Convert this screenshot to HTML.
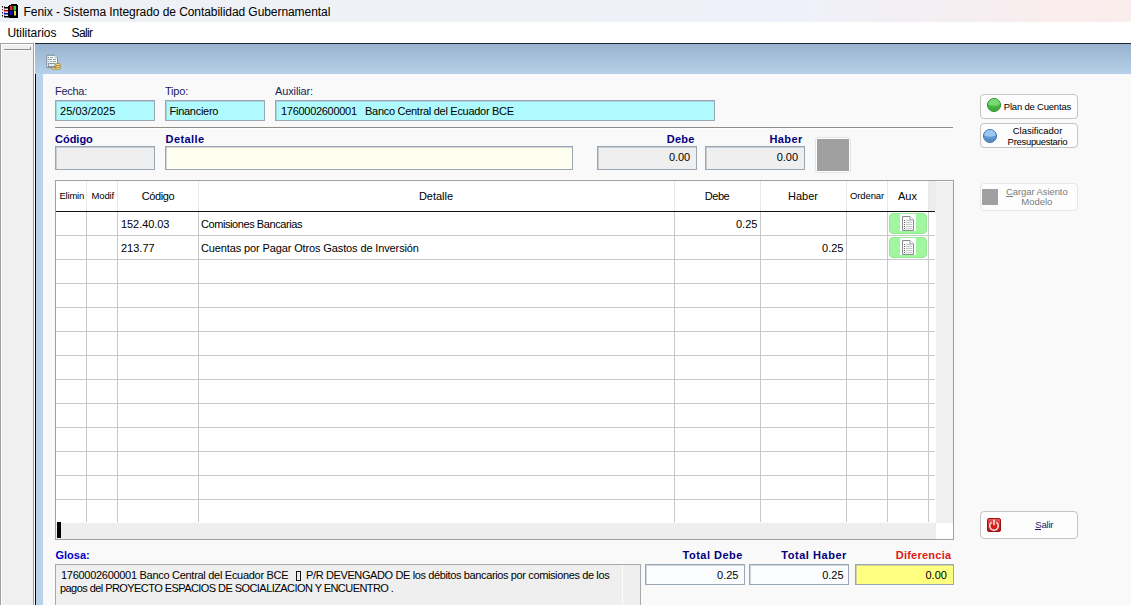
<!DOCTYPE html>
<html><head><meta charset="utf-8"><style>
html,body{margin:0;padding:0;width:1131px;height:605px;overflow:hidden;background:#f8f8f8;}
body>div{position:absolute;}
.t{font-family:"Liberation Sans",sans-serif;white-space:pre;}
</style></head><body>
<div style="left:0px;top:0px;width:1131px;height:22px;background:linear-gradient(90deg,#eef1f5 0%,#eef1f5 45%,#eef1f8 62%,#eff1fa 70%,#f3eff3 82%,#f9edee 92%,#f9eeec 100%);"></div>
<div style="left:0px;top:22px;width:1131px;height:21px;background:#fff;"></div>
<div style="left:0px;top:43px;width:34px;height:562px;background:#f0f0f0;border-left:1px solid #a0a0a0;border-top:1px solid #a0a0a0;border-right:1px solid #a0a0a0;box-sizing:border-box;"></div>
<div style="left:1px;top:44px;width:32px;height:1px;background:#fff;"></div>
<div style="left:1px;top:44px;width:1px;height:561px;background:#fff;"></div>
<div style="left:4px;top:49px;width:27px;height:1px;background:#8c8c8c;"></div>
<div style="left:4px;top:50px;width:27px;height:1px;background:#fafafa;"></div>
<div style="left:30px;top:47px;width:1px;height:3px;background:#8c8c8c;"></div>
<div style="left:34px;top:43px;width:1px;height:562px;background:#fff;"></div>
<div style="left:35px;top:43px;width:1096px;height:1px;background:#1e2a36;"></div>
<div style="left:35px;top:44px;width:1096px;height:30px;background:linear-gradient(180deg,#98b2cf 0%,#a8c2dc 50%,#b6d0ea 100%);"></div>
<div style="left:35px;top:74px;width:8px;height:531px;background:#b9d1ea;"></div>
<div style="left:35px;top:74px;width:1px;height:531px;background:#000;"></div>
<div style="left:43px;top:74px;width:1088px;height:531px;background:#f9f9f9;"></div>
<div style="left:55px;top:127px;width:898px;height:1px;background:#8c8c8c;"></div>
<div style="left:55px;top:128px;width:898px;height:1px;background:#fff;"></div>
<div style="left:55px;top:100px;width:100px;height:21px;background:#affafc;border:1px solid #9aa6b2;box-shadow:inset 1px 1px 0 rgba(150,165,180,0.45);box-sizing:border-box;"></div>
<div style="left:165px;top:100px;width:100px;height:21px;background:#affafc;border:1px solid #9aa6b2;box-shadow:inset 1px 1px 0 rgba(150,165,180,0.45);box-sizing:border-box;"></div>
<div style="left:275px;top:100px;width:440px;height:21px;background:#affafc;border:1px solid #9aa6b2;box-shadow:inset 1px 1px 0 rgba(150,165,180,0.45);box-sizing:border-box;"></div>
<div style="left:55px;top:146px;width:100px;height:24px;background:#efefef;border:1px solid #9aa6b2;box-shadow:inset 1px 1px 0 rgba(150,165,180,0.45);box-sizing:border-box;"></div>
<div style="left:165px;top:146px;width:408px;height:24px;background:#fffff0;border:1px solid #9aa6b2;box-shadow:inset 1px 1px 0 rgba(150,165,180,0.45);box-sizing:border-box;"></div>
<div style="left:597px;top:146px;width:100px;height:24px;background:#efefef;border:1px solid #9aa6b2;box-shadow:inset 1px 1px 0 rgba(150,165,180,0.45);box-sizing:border-box;"></div>
<div style="left:705px;top:146px;width:100px;height:24px;background:#efefef;border:1px solid #9aa6b2;box-shadow:inset 1px 1px 0 rgba(150,165,180,0.45);box-sizing:border-box;"></div>
<div style="left:815px;top:137px;width:36px;height:36px;background:#fff;border:1px solid #e4e4e4;border-radius:3px;box-sizing:border-box;"></div>
<div style="left:817px;top:139px;width:32px;height:32px;background:#a0a0a0;"></div>
<div style="left:55px;top:180px;width:899px;height:360px;background:#fff;border:1px solid #a0a0a0;box-sizing:border-box;"></div>
<div style="left:929px;top:181px;width:7px;height:30px;background:#ececec;"></div>
<div style="left:936px;top:182px;width:17px;height:341px;background:#f0f0f0;"></div>
<div style="left:56px;top:523px;width:880px;height:16px;background:#eeeeee;"></div>
<div style="left:57px;top:522px;width:4px;height:16px;background:#000;"></div>
<div style="left:56px;top:211px;width:879px;height:1px;background:#111;"></div>
<div style="left:86px;top:181px;width:1px;height:30px;background:#e8e8e8;"></div>
<div style="left:86px;top:212px;width:1px;height:310px;background:#c8c8c8;"></div>
<div style="left:117px;top:181px;width:1px;height:30px;background:#e8e8e8;"></div>
<div style="left:117px;top:212px;width:1px;height:310px;background:#c8c8c8;"></div>
<div style="left:198px;top:181px;width:1px;height:30px;background:#e8e8e8;"></div>
<div style="left:198px;top:212px;width:1px;height:310px;background:#c8c8c8;"></div>
<div style="left:674px;top:181px;width:1px;height:30px;background:#e8e8e8;"></div>
<div style="left:674px;top:212px;width:1px;height:310px;background:#c8c8c8;"></div>
<div style="left:760px;top:181px;width:1px;height:30px;background:#e8e8e8;"></div>
<div style="left:760px;top:212px;width:1px;height:310px;background:#c8c8c8;"></div>
<div style="left:846px;top:181px;width:1px;height:30px;background:#e8e8e8;"></div>
<div style="left:846px;top:212px;width:1px;height:310px;background:#c8c8c8;"></div>
<div style="left:887px;top:181px;width:1px;height:30px;background:#e8e8e8;"></div>
<div style="left:887px;top:212px;width:1px;height:310px;background:#c8c8c8;"></div>
<div style="left:928px;top:181px;width:1px;height:30px;background:#e8e8e8;"></div>
<div style="left:928px;top:212px;width:1px;height:310px;background:#c8c8c8;"></div>
<div style="left:56px;top:235px;width:879px;height:1px;background:#c8c8c8;"></div>
<div style="left:56px;top:259px;width:879px;height:1px;background:#c8c8c8;"></div>
<div style="left:56px;top:283px;width:879px;height:1px;background:#c8c8c8;"></div>
<div style="left:56px;top:307px;width:879px;height:1px;background:#c8c8c8;"></div>
<div style="left:56px;top:331px;width:879px;height:1px;background:#c8c8c8;"></div>
<div style="left:56px;top:355px;width:879px;height:1px;background:#c8c8c8;"></div>
<div style="left:56px;top:379px;width:879px;height:1px;background:#c8c8c8;"></div>
<div style="left:56px;top:403px;width:879px;height:1px;background:#c8c8c8;"></div>
<div style="left:56px;top:427px;width:879px;height:1px;background:#c8c8c8;"></div>
<div style="left:56px;top:451px;width:879px;height:1px;background:#c8c8c8;"></div>
<div style="left:56px;top:475px;width:879px;height:1px;background:#c8c8c8;"></div>
<div style="left:56px;top:499px;width:879px;height:1px;background:#c8c8c8;"></div>
<div style="left:889px;top:213px;width:38px;height:21px;background:#a0f7a0;border:1px solid #94e894;box-sizing:border-box;border-radius:4px;"></div>
<svg style="position:absolute;left:900px;top:214px" width="16" height="17" viewBox="0 0 16 17"><rect x="0" y="0" width="16" height="17" fill="#fff"/>
<path d="M2.5 2.5 H10 L13.5 6 V16.5 H2.5 Z" fill="#fafafa" stroke="#8a8a8a" stroke-width="1"/>
<path d="M10 2.5 V6 H13.5" fill="#fff" stroke="#8a8a8a" stroke-width="0.8"/>
<g fill="#606060"><rect x="4" y="6" width="1" height="1"/><rect x="4" y="8" width="1" height="1"/><rect x="4" y="10" width="1" height="1"/><rect x="4" y="12" width="1" height="1"/><rect x="4" y="14" width="1" height="1"/></g>
<g fill="#c8c8c8"><rect x="6" y="6" width="6" height="1"/><rect x="6" y="8" width="6" height="1"/><rect x="6" y="10" width="6" height="1"/><rect x="6" y="12" width="6" height="1"/><rect x="6" y="14" width="6" height="1"/></g></svg>
<div style="left:889px;top:237px;width:38px;height:21px;background:#a0f7a0;border:1px solid #94e894;box-sizing:border-box;border-radius:4px;"></div>
<svg style="position:absolute;left:900px;top:238px" width="16" height="17" viewBox="0 0 16 17"><rect x="0" y="0" width="16" height="17" fill="#fff"/>
<path d="M2.5 2.5 H10 L13.5 6 V16.5 H2.5 Z" fill="#fafafa" stroke="#8a8a8a" stroke-width="1"/>
<path d="M10 2.5 V6 H13.5" fill="#fff" stroke="#8a8a8a" stroke-width="0.8"/>
<g fill="#606060"><rect x="4" y="6" width="1" height="1"/><rect x="4" y="8" width="1" height="1"/><rect x="4" y="10" width="1" height="1"/><rect x="4" y="12" width="1" height="1"/><rect x="4" y="14" width="1" height="1"/></g>
<g fill="#c8c8c8"><rect x="6" y="6" width="6" height="1"/><rect x="6" y="8" width="6" height="1"/><rect x="6" y="10" width="6" height="1"/><rect x="6" y="12" width="6" height="1"/><rect x="6" y="14" width="6" height="1"/></g></svg>
<div style="left:55px;top:564px;width:586px;height:41px;background:#efefef;border:1px solid #a8a8a8;border-bottom:none;box-sizing:border-box;"></div>
<div style="left:622px;top:565px;width:1px;height:40px;background:#fafafa;"></div>
<div style="left:645px;top:564px;width:100px;height:21px;background:#fafcff;border:1px solid #9aa6b2;box-shadow:inset 1px 1px 0 rgba(150,165,180,0.45);box-sizing:border-box;"></div>
<div style="left:749px;top:564px;width:100px;height:21px;background:#fafcff;border:1px solid #9aa6b2;box-shadow:inset 1px 1px 0 rgba(150,165,180,0.45);box-sizing:border-box;"></div>
<div style="left:855px;top:564px;width:99px;height:21px;background:#ffff80;border:1px solid #9aa6b2;box-shadow:inset 1px 1px 0 rgba(150,165,180,0.45);box-sizing:border-box;"></div>
<div style="left:980px;top:94px;width:98px;height:25px;background:#fdfdfd;border:1px solid #c4c4c4;border-radius:4px;box-sizing:border-box;"></div>
<div style="left:980px;top:123px;width:98px;height:25px;background:#fdfdfd;border:1px solid #c4c4c4;border-radius:4px;box-sizing:border-box;"></div>
<div style="left:980px;top:183px;width:98px;height:28px;background:#fdfdfd;border:1px solid #e6e6e6;border-radius:4px;box-sizing:border-box;"></div>
<div style="left:980px;top:511px;width:98px;height:28px;background:#fdfdfd;border:1px solid #c4c4c4;border-radius:4px;box-sizing:border-box;"></div>
<svg style="position:absolute;left:987px;top:98px" width="14" height="14" viewBox="0 0 14 14"><circle cx="7" cy="7" r="6.5" fill="#46b842" stroke="#2a8a2a" stroke-width="1"/>
<path d="M1.2 6.5 A5.8 5.8 0 0 1 12.8 6.5 Q7 9 1.2 6.5 Z" fill="#7ad874"/>
<path d="M2 9 Q7 12.5 12 9 A5.8 5.8 0 0 1 2 9Z" fill="#2a8a2a" opacity="0.5"/></svg>
<svg style="position:absolute;left:983px;top:129px" width="14" height="14" viewBox="0 0 14 14"><circle cx="7" cy="7" r="6.5" fill="#5e98d2" stroke="#3e6ea4" stroke-width="1"/>
<path d="M1.2 6.5 A5.8 5.8 0 0 1 12.8 6.5 Q7 9 1.2 6.5 Z" fill="#9ac8f0"/>
<path d="M2 9 Q7 12.5 12 9 A5.8 5.8 0 0 1 2 9Z" fill="#3a6aa0" opacity="0.5"/></svg>
<div style="left:982px;top:189px;width:16px;height:16px;background:#a0a0a0;"></div>
<svg style="position:absolute;left:987px;top:518px" width="14" height="14" viewBox="0 0 14 14"><defs><linearGradient id="pg" x1="0" y1="0" x2="0" y2="1"><stop offset="0" stop-color="#e86060"/><stop offset="0.5" stop-color="#d02828"/><stop offset="1" stop-color="#b01818"/></linearGradient>
<radialGradient id="pr" cx="0.5" cy="0.6" r="0.35"><stop offset="0" stop-color="#ff1010"/><stop offset="1" stop-color="#d02020" stop-opacity="0"/></radialGradient></defs>
<rect x="0.5" y="0.5" width="13" height="13" rx="1.5" fill="url(#pg)" stroke="#a01414" stroke-width="1"/>
<rect x="2" y="3" width="10" height="9" fill="url(#pr)"/>
<path d="M4.6 4.3 A4.3 4.3 0 1 0 9.4 4.3" fill="none" stroke="#fbe4e4" stroke-width="1.5"/>
<rect x="6.25" y="1.6" width="1.5" height="5.6" fill="#f8e0e0"/></svg>
<svg style="position:absolute;left:0px;top:2px" width="20" height="18" viewBox="0 0 20 18"><rect x="11" y="2" width="6" height="1" fill="#000"/><rect x="9" y="3" width="9" height="13" fill="#000"/><rect x="8" y="4" width="1" height="11.5" fill="#000"/><rect x="10" y="4" width="2.5" height="4" fill="#e02828"/><rect x="13.5" y="4" width="2.5" height="4.5" fill="#38d038"/><rect x="10" y="8.5" width="2.5" height="4.5" fill="#1010d0"/><rect x="14" y="9" width="2" height="4.5" fill="#e8e030"/><rect x="2" y="4" width="1" height="1.5" fill="#000"/><rect x="2" y="7" width="1" height="1.5" fill="#904848"/><rect x="2" y="10" width="1" height="1.5" fill="#202088"/><rect x="2" y="13" width="1" height="1.5" fill="#000"/><rect x="4" y="5" width="4" height="1.5" fill="#000"/><rect x="4" y="8" width="4" height="1.5" fill="#d00000"/><rect x="4" y="11" width="4" height="1.5" fill="#0000b0"/><rect x="4" y="14" width="4" height="1.5" fill="#000"/><rect x="4" y="4.5" width="1" height="1" fill="#000"/><rect x="4" y="7.5" width="1" height="1" fill="#d00000"/><rect x="4" y="10.5" width="1" height="1" fill="#0000b0"/><rect x="4" y="13.5" width="1" height="1" fill="#000"/></svg>
<svg style="position:absolute;left:45px;top:53px" width="17" height="18" viewBox="0 0 17 18"><path d="M1.8 2.3 H10 L12.5 4.8 V14.5 H1.8 Z" fill="#f6fafb" stroke="#7e8c96" stroke-width="1"/>
<path d="M10 2.3 V4.8 H12.5" fill="#fff" stroke="#a8b4ba" stroke-width="0.8"/>
<rect x="3" y="4" width="1" height="1" fill="#6a7a84"/><rect x="5" y="4" width="3" height="1" fill="#98a6ae"/>
<rect x="3" y="6" width="4" height="1" fill="#8898a2"/><rect x="8" y="6" width="3" height="1" fill="#98a6ae"/>
<rect x="3" y="8" width="1" height="1" fill="#8898a2"/><rect x="5" y="8" width="2" height="1" fill="#98a6ae"/><rect x="8" y="8" width="3" height="1" fill="#8898a2"/>
<rect x="3.5" y="10.5" width="6.5" height="3" fill="#e4eaee" stroke="#8a98a0" stroke-width="1"/>
<g stroke="#a07c28" stroke-width="0.7">
<rect x="10.6" y="10.6" width="4.8" height="1.9" rx="0.9" fill="#e6c460"/>
<rect x="10.6" y="12.5" width="4.8" height="1.9" rx="0.9" fill="#e6c460"/>
<rect x="10.6" y="14.4" width="4.8" height="1.9" rx="0.9" fill="#e6c460"/>
<rect x="6.6" y="14.4" width="4" height="1.9" rx="0.9" fill="#e6c460"/>
</g>
<g fill="#f8e6a8"><rect x="11.5" y="11.1" width="3" height="0.7"/><rect x="11.5" y="13" width="3" height="0.7"/><rect x="11.5" y="14.9" width="3" height="0.7"/><rect x="7.4" y="14.9" width="2.4" height="0.7"/></g></svg>
<div class="t" style="left:23.60px;top:6px;font-size:12px;line-height:12px;color:#000;letter-spacing:-0.064px;">Fenix - Sistema Integrado de Contabilidad Gubernamental</div>
<div class="t" style="left:7.40px;top:27px;font-size:12px;line-height:12px;color:#000;letter-spacing:-0.033px;">Utilitarios</div>
<div class="t" style="left:71.50px;top:27px;font-size:12px;line-height:12px;color:#000;letter-spacing:-0.603px;">Salir</div>
<div class="t" style="left:55.00px;top:86px;font-size:11px;line-height:11px;color:#1c1c60;letter-spacing:-0.276px;">Fecha:</div>
<div class="t" style="left:165.00px;top:86px;font-size:11px;line-height:11px;color:#1c1c60;letter-spacing:-0.212px;">Tipo:</div>
<div class="t" style="left:275.00px;top:86px;font-size:11px;line-height:11px;color:#1c1c60;letter-spacing:-0.125px;">Auxiliar:</div>
<div class="t" style="left:60.00px;top:106px;font-size:11px;line-height:11px;color:#000;letter-spacing:0.037px;">25/03/2025</div>
<div class="t" style="left:169.50px;top:106px;font-size:11px;line-height:11px;color:#000;letter-spacing:-0.267px;">Financiero</div>
<div class="t" style="left:281.00px;top:106px;font-size:11px;line-height:11px;color:#000;letter-spacing:-0.290px;">1760002600001   Banco Central del Ecuador BCE</div>
<div class="t" style="left:55.00px;top:134px;font-size:11px;line-height:11px;color:#000080;font-weight:bold;letter-spacing:-0.013px;">Código</div>
<div class="t" style="left:165.50px;top:134px;font-size:11px;line-height:11px;color:#000080;font-weight:bold;letter-spacing:0.444px;">Detalle</div>
<div class="t" style="left:666.80px;top:134px;font-size:11px;line-height:11px;color:#000080;font-weight:bold;letter-spacing:0.248px;">Debe</div>
<div class="t" style="left:769.40px;top:134px;font-size:11px;line-height:11px;color:#000080;font-weight:bold;letter-spacing:0.442px;">Haber</div>
<div class="t" style="left:668.90px;top:152px;font-size:11px;line-height:11px;color:#000;letter-spacing:-0.034px;">0.00</div>
<div class="t" style="left:776.70px;top:152px;font-size:11px;line-height:11px;color:#000;letter-spacing:-0.034px;">0.00</div>
<div class="t" style="left:59.50px;top:191px;font-size:9.5px;line-height:9.5px;color:#000;letter-spacing:-0.227px;">Elimin</div>
<div class="t" style="left:91.50px;top:191px;font-size:9.5px;line-height:9.5px;color:#000;letter-spacing:-0.144px;">Modif</div>
<div class="t" style="left:141.75px;top:191px;font-size:11px;line-height:11px;color:#000;letter-spacing:-0.396px;">Código</div>
<div class="t" style="left:418.88px;top:191px;font-size:11px;line-height:11px;color:#000;">Detalle</div>
<div class="t" style="left:704.75px;top:191px;font-size:11px;line-height:11px;color:#000;letter-spacing:-0.453px;">Debe</div>
<div class="t" style="left:788.02px;top:191px;font-size:11px;line-height:11px;color:#000;">Haber</div>
<div class="t" style="left:850.00px;top:191px;font-size:9.5px;line-height:9.5px;color:#000;letter-spacing:-0.118px;">Ordenar</div>
<div class="t" style="left:898.02px;top:191px;font-size:11px;line-height:11px;color:#000;">Aux</div>
<div class="t" style="left:121.00px;top:219px;font-size:11px;line-height:11px;color:#000;letter-spacing:-0.056px;">152.40.03</div>
<div class="t" style="left:201.00px;top:219px;font-size:11px;line-height:11px;color:#000;letter-spacing:-0.423px;">Comisiones Bancarias</div>
<div class="t" style="left:735.96px;top:219px;font-size:11px;line-height:11px;color:#000;">0.25</div>
<div class="t" style="left:121.00px;top:243px;font-size:11px;line-height:11px;color:#000;">213.77</div>
<div class="t" style="left:201.00px;top:243px;font-size:11px;line-height:11px;color:#000;letter-spacing:-0.124px;">Cuentas por Pagar Otros Gastos de Inversión</div>
<div class="t" style="left:822.06px;top:243px;font-size:11px;line-height:11px;color:#000;">0.25</div>
<div class="t" style="left:55.60px;top:550px;font-size:11px;line-height:11px;color:#0000c8;font-weight:bold;letter-spacing:-0.042px;">Glosa:</div>
<div class="t" style="left:682.50px;top:550px;font-size:11px;line-height:11px;color:#000080;font-weight:bold;letter-spacing:0.506px;">Total Debe</div>
<div class="t" style="left:781.30px;top:550px;font-size:11px;line-height:11px;color:#000080;font-weight:bold;letter-spacing:0.535px;">Total Haber</div>
<div class="t" style="left:895.70px;top:550px;font-size:11px;line-height:11px;color:#dc1a1a;font-weight:bold;letter-spacing:0.248px;">Diferencia</div>
<div class="t" style="left:717.06px;top:570px;font-size:11px;line-height:11px;color:#000;">0.25</div>
<div class="t" style="left:822.16px;top:570px;font-size:11px;line-height:11px;color:#000;">0.25</div>
<div class="t" style="left:925.46px;top:570px;font-size:11px;line-height:11px;color:#000;">0.00</div>
<div class="t" style="left:61.00px;top:570px;font-size:11px;line-height:11px;color:#000;letter-spacing:-0.289px;">1760002600001 Banco Central del Ecuador BCE</div>
<div style="left:296px;top:571px;width:5px;height:10px;border:1px solid #111;box-sizing:border-box;"></div>
<div class="t" style="left:306.00px;top:570px;font-size:11px;line-height:11px;color:#000;letter-spacing:-0.376px;">P/R DEVENGADO DE los débitos bancarios por comisiones de los</div>
<div class="t" style="left:60.00px;top:583px;font-size:11px;line-height:11px;color:#000;letter-spacing:-0.563px;">pagos del PROYECTO ESPACIOS DE SOCIALIZACION Y ENCUENTRO .</div>
<div class="t" style="left:1003.80px;top:102px;font-size:9.5px;line-height:9.5px;color:#000;letter-spacing:-0.202px;">Plan de Cuentas</div>
<div class="t" style="left:1012.70px;top:126px;font-size:9.5px;line-height:9.5px;color:#000;">Clasificador</div>
<div class="t" style="left:1007.60px;top:137px;font-size:9.5px;line-height:9.5px;color:#000;letter-spacing:-0.305px;">Presupuestario</div>
<div class="t" style="left:1006.00px;top:187px;font-size:9.5px;line-height:9.5px;color:#7c7c7c;letter-spacing:-0.087px;">Cargar Asiento</div>
<div class="t" style="left:1021.23px;top:197px;font-size:9.5px;line-height:9.5px;color:#7c7c7c;">Modelo</div>
<div style="left:1006px;top:196px;width:7px;height:1px;background:#7c7c7c;"></div>
<div class="t" style="left:1035.30px;top:520px;font-size:9.5px;line-height:9.5px;color:#1a1a6a;letter-spacing:-0.200px;">Salir</div>
<div style="left:1035px;top:529px;width:6px;height:1px;background:#1a1a6a;"></div>
</body></html>
